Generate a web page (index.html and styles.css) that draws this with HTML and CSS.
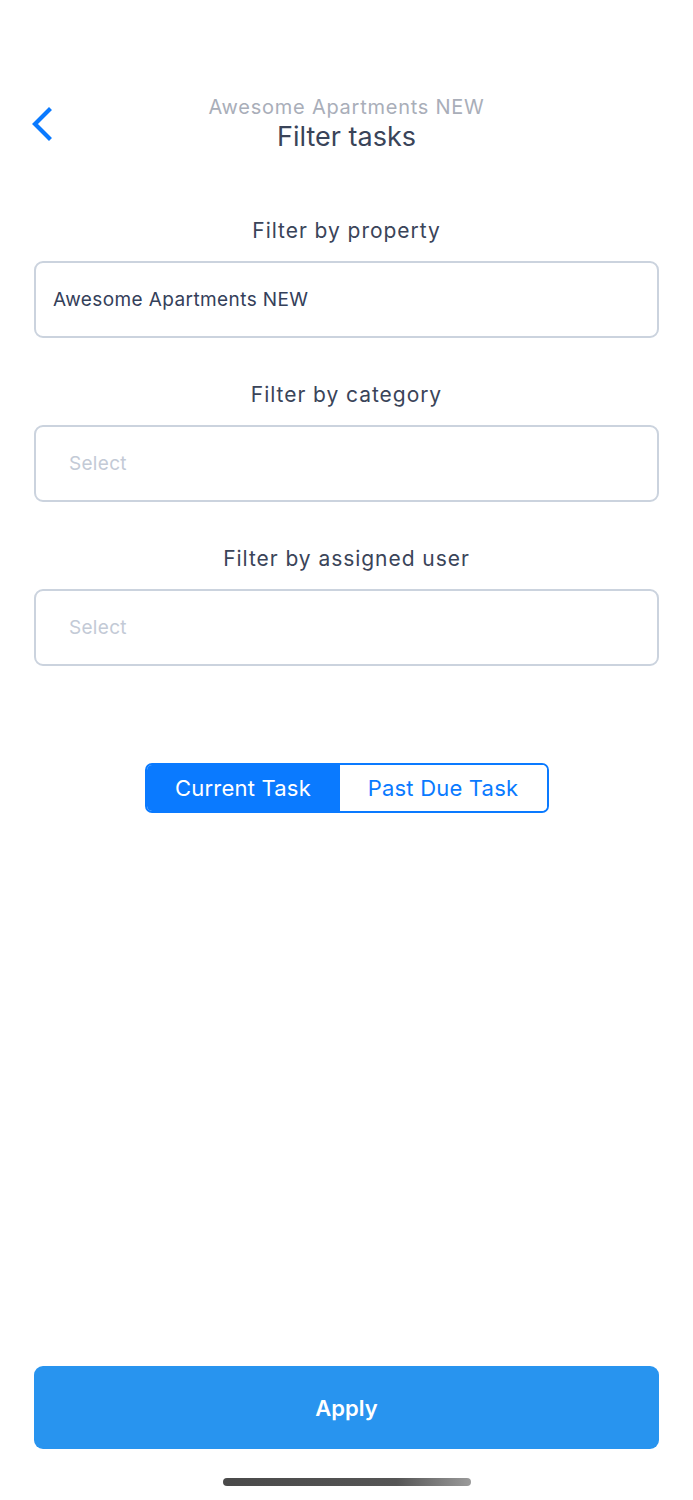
FILE: index.html
```html
<!DOCTYPE html>
<html>
<head>
<meta charset="utf-8">
<link rel="stylesheet" href="styles.css">
</head>
<body>
<div class="screen">
  <header class="nav">
    <div class="nav-side">
      <svg class="back" width="24" height="34" viewBox="0 0 24 34">
        <path d="M19 3 L5 17 L19 31" fill="none" stroke="#0a7aff" stroke-width="4.2" stroke-linecap="square" stroke-linejoin="miter"/>
      </svg>
    </div>
    <div class="nav-title">
      <div class="subtitle">Awesome Apartments NEW</div>
      <div class="title">Filter tasks</div>
    </div>
    <div class="nav-side"></div>
  </header>

  <main class="form">
    <section class="field">
      <div class="label">Filter by property</div>
      <div class="box"><span class="value">Awesome Apartments NEW</span></div>
    </section>
    <section class="field">
      <div class="label">Filter by category</div>
      <div class="box"><span class="placeholder">Select</span></div>
    </section>
    <section class="field">
      <div class="label">Filter by assigned user</div>
      <div class="box"><span class="placeholder">Select</span></div>
    </section>

    <div class="segment-wrap">
      <div class="segment">
        <div class="seg seg-on">Current Task</div>
        <div class="seg seg-off">Past Due Task</div>
      </div>
    </div>
  </main>

  <footer class="footer">
    <button class="apply">Apply</button>
    <div class="home-indicator"></div>
  </footer>
</div>
</body>
</html>
```

FILE: styles.css
```css
* { box-sizing: border-box; }
html, body { margin: 0; padding: 0; background: #fff; }
body { font-family: Inter, "Noto Sans", "Liberation Sans", sans-serif; color: #3a4459; }

.screen {
  width: 693px;
  height: 1500px;
  display: flex;
  flex-direction: column;
}

.nav {
  display: grid;
  grid-template-columns: 80px 1fr 80px;
  align-items: center;
  padding-top: 95px;
}
.nav-side { display: flex; align-items: center; padding-left: 30px; margin-top: -1px; }
.back { display: block; }
.nav-title { text-align: center; }
.subtitle {
  font-size: 20px;
  line-height: 24px;
  color: #a9aeb9;
  letter-spacing: 0.75px;
}
.title {
  font-size: 27px;
  line-height: 34px;
  color: #3a4459;
  margin-top: 1px;
}

.form {
  padding: 0 34px;
  margin-top: 64px;
}
.field { display: flex; flex-direction: column; }
.field + .field { margin-top: 44px; }
.label {
  text-align: center;
  font-size: 21px;
  line-height: 26px;
  color: #3a4459;
  letter-spacing: 0.95px;
  margin-bottom: 17px;
}
.box {
  height: 77px;
  border: 2px solid #cbd3de;
  border-radius: 9px;
  display: flex;
  align-items: center;
}
.value {
  padding-left: 17px;
  font-size: 19px;
  letter-spacing: 0.4px;
  color: #34405a;
}
.placeholder {
  padding-left: 33px;
  font-size: 19px;
  letter-spacing: 0.3px;
  color: #c3cad6;
}

.segment-wrap {
  display: flex;
  justify-content: center;
  margin-top: 97px;
}
.segment {
  display: flex;
  height: 50px;
  border: 2px solid #0a7aff;
  border-radius: 7px;
  overflow: hidden;
}
.seg {
  display: flex;
  align-items: center;
  justify-content: center;
  font-size: 22px;
  letter-spacing: 0.2px;
}
.seg-on { width: 193px; background: #0a7aff; color: #fff; }
.seg-off { width: 207px; background: #fff; color: #0a7aff; }

.footer {
  margin-top: auto;
  padding: 0 34px 14px;
  display: flex;
  flex-direction: column;
  align-items: center;
}
.apply {
  width: 100%;
  height: 83px;
  border: none;
  border-radius: 9px;
  background: #2894ef;
  color: #fff;
  font-family: inherit;
  font-size: 22px;
  font-weight: 600;
}
.home-indicator {
  margin-top: 29px;
  width: 248px;
  height: 8px;
  border-radius: 4px;
  background: linear-gradient(90deg, #4a4a4a 0%, #555 70%, #9a9a9a 100%);
}
```
